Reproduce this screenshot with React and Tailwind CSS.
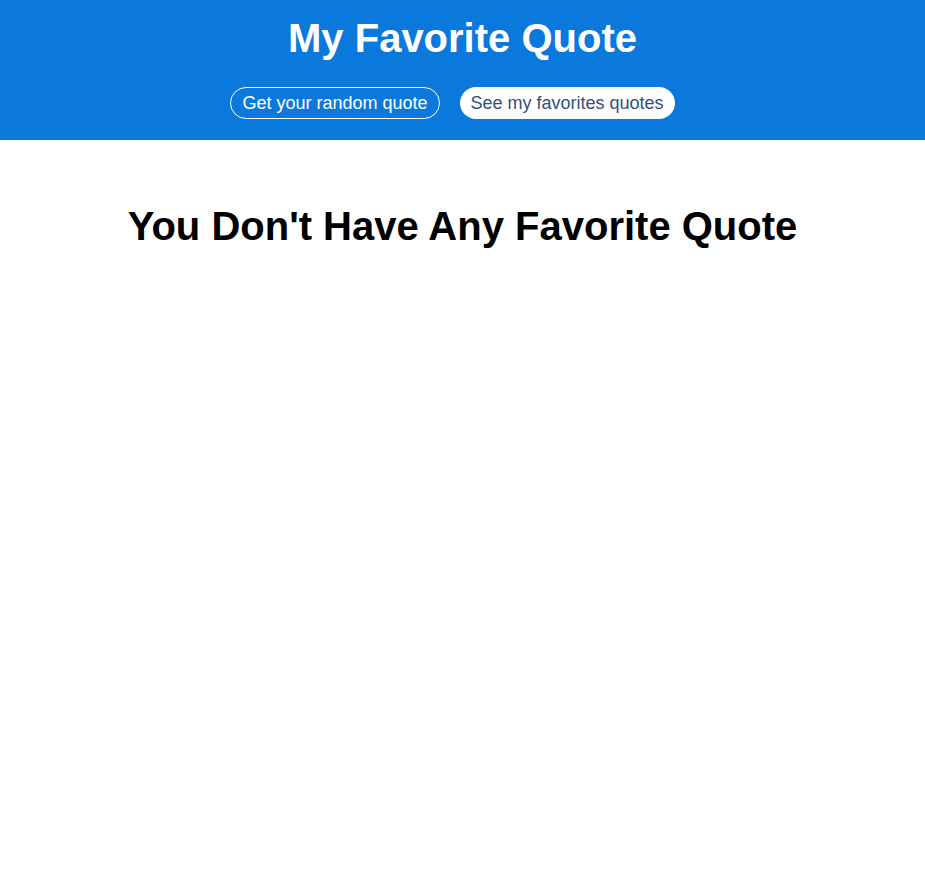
export default function App() {
  return (
    <div className="min-h-[876px] bg-white" style={{ fontFamily: '"Liberation Sans", Arial, sans-serif' }}>
      <header className="h-[140px] bg-[#0b78dc] flex flex-col items-center">
        <h1 className="mt-[14px] text-[40px] leading-[48px] font-bold text-white">My Favorite Quote</h1>
        <nav className="mt-[25px] flex">
          <button className="mr-5 h-8 px-[11px] rounded-full border border-white text-white text-[18px]">Get your random quote</button>
          <button className="mr-5 h-8 px-[11px] rounded-full bg-white text-[#34507a] text-[18px]">See my favorites quotes</button>
        </nav>
      </header>
      <main className="flex justify-center">
        <h2 className="mt-[62px] text-[40px] leading-[48px] font-bold text-black">You Don't Have Any Favorite Quote</h2>
      </main>
    </div>
  )
}
